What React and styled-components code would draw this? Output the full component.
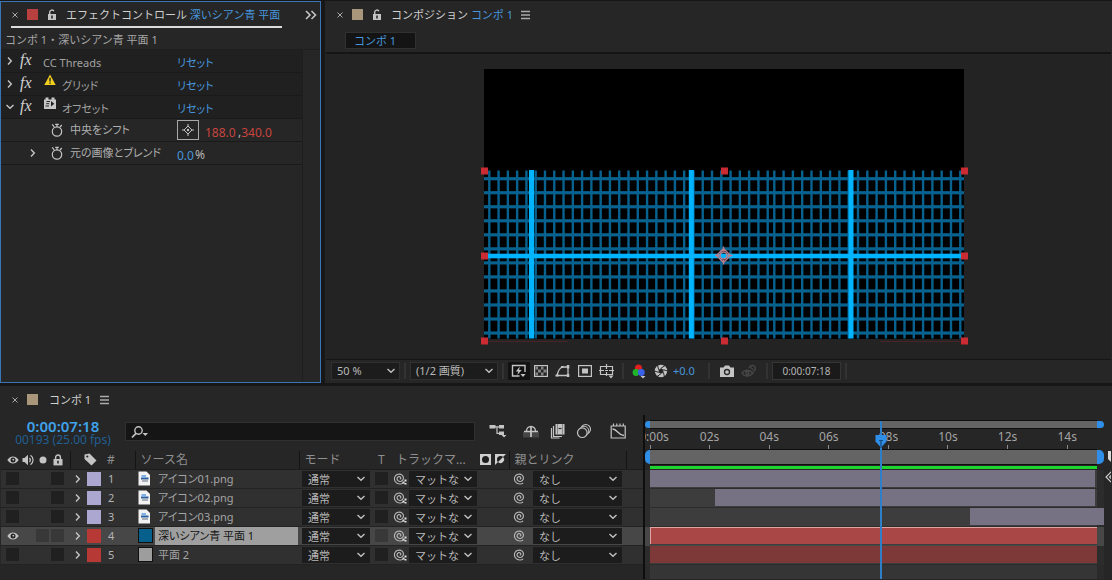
import React from "react";
import styled, { createGlobalStyle, css } from "styled-components";

const GlobalStyle = createGlobalStyle`
  *, *::before, *::after { box-sizing: border-box; }
  html, body { margin: 0; background: #171717; }
  body, button, input, select, table {
    font-family: "Noto Sans", "Noto Sans CJK JP", sans-serif;
    font-size: 11px;
    line-height: 16px;
    color: #b4b4b4;
  }
  h1, h2, p { margin: 0; font-size: 11px; font-weight: 400; }
  svg { display: block; flex: none; }
`;

/* ---------- shared parts ---------- */

const proportionalKana = css`
  font-feature-settings: "palt";
`;

const Page = styled.div`
  min-height: 100vh;
  display: grid;
  grid-template-rows: auto 1fr;
  gap: 3px;
  padding-top: 1px;
  overflow: hidden;
`;

const TopPanels = styled.div`
  display: grid;
  grid-template-columns: 321px minmax(0, 1fr);
  gap: 4px;
`;

const Panel = styled.section`
  background: #262626;
  border: 1px solid ${(p) => (p.$active ? "#3b74b5" : "#262626")};
  min-width: 0;
`;

const PlainButton = styled.button`
  display: flex;
  align-items: center;
  justify-content: center;
  padding: 0;
  border: 0;
  background: ${(p) => (p.$pressed ? "#121212" : "none")};
  width: ${(p) => p.$w || 16}px;
  height: ${(p) => p.$h || 16}px;
  color: #c4c4c4;
  flex: none;
`;

const TabBar = styled.header`
  display: flex;
  align-items: flex-start;
  height: ${(p) => p.$h || 26}px;
  padding: 0 1px 0 5px;
`;

const Tab = styled.div`
  display: flex;
  align-items: center;
  height: 26px;
  padding: 1px 2px 0 0;
  margin-left: 5px;
  border-bottom: 2px solid ${(p) => (p.$underlined ? "#dcdcdc" : "transparent")};
`;

const TabMore = styled(PlainButton)`
  align-self: center;
`;

const Swatch = styled.span`
  width: 11px;
  height: 11px;
  background: ${(p) => p.$color};
  margin-left: 8px;
  flex: none;
`;

const TabTitle = styled.h2`
  padding-top: 1px;
  margin-left: ${(p) => p.$gap || 0}px;
  line-height: 20px;
  white-space: nowrap;
  color: #d0d0d0;
`;

const Blue = styled.span`
  color: #4796dc;
`;

const Spacer = styled.span`
  flex: 1;
`;

/* ---------- icons ---------- */

const Svg = ({ w = 16, h = 16, vb, children }) => (
  <svg
    width={w}
    height={h}
    viewBox={vb || `0 0 ${w} ${h}`}
    fill="none"
    stroke="currentColor"
    strokeWidth="1.4"
    aria-hidden="true"
  >
    {children}
  </svg>
);
const CloseIcon = () => (
  <Svg w={8} h={8}><path d="M1.500 1.500l5 5M6.500 1.500l-5 5" strokeWidth="1" stroke="#a8a8a8" /></Svg>
);
const UnlockIcon = () => (
  <Svg w={10} h={12}>
    <rect x="1" y="5" width="8" height="6" fill="currentColor" stroke="none" />
    <path d="M2.700 5.500V3.200A2.200 2.200 0 0 1 6.900 2.300" />
    <path d="M5 6.500v3" stroke="#262626" strokeWidth="1.600" />
  </Svg>
);
const LockIcon = () => (
  <Svg w={10} h={12}>
    <rect x="0.500" y="5" width="9" height="6.400" fill="currentColor" stroke="none" />
    <path d="M2.600 5.500V3.400a2.400 2.400 0 0 1 4.800 0v2.100" />
    <path d="M5 6.800v2.600" stroke="#262626" strokeWidth="1.600" />
  </Svg>
);
const MenuIcon = () => (
  <Svg w={9} h={10}><path d="M0 1.500h9M0 5h9M0 8.500h9" strokeWidth="1.300" stroke="#aaa" /></Svg>
);
const MoreIcon = () => (
  <Svg w={12} h={10}><path d="M1 1l4 4-4 4M6.500 1l4 4-4 4" strokeWidth="1.600" /></Svg>
);
const RightIcon = () => (
  <Svg w={6} h={10}><path d="M1 1.500L4.300 5 1 8.500" /></Svg>
);
const DownIcon = () => (
  <Svg w={10} h={6}><path d="M1.500 1L5 4.300 8.500 1" /></Svg>
);
const StopwatchIcon = () => (
  <Svg w={14} h={16}>
    <circle cx="7" cy="9.500" r="4.700" strokeWidth="1.200" />
    <path d="M7 5V3M5.200 2.300h3.600M2.200 2.300l2 2.500M11.800 3L10 5M5.600 8" strokeWidth="1.200" />
  </Svg>
);
const WarningIcon = () => (
  <Svg w={12} h={12}>
    <path d="M6 0.500L11.700 11H0.300z" fill="#f3cf1d" stroke="none" />
    <path d="M6 3.800v3.600M6 8.400v1.400" stroke="#222" strokeWidth="1.400" />
  </Svg>
);
const GpuIcon = () => (
  <Svg w={12} h={12}>
    <path d="M0 2.500h1.500V0.500h3v2h3v-2h3v2H12V12H0z" fill="#c8c8c8" stroke="none" />
    <path d="M2.500 4.500h3.500M2.200 6.700h3M1.500 9h3.500" stroke="#2a2a2a" strokeWidth="1" />
    <path d="M7 4L10.300 6.800 7 9.600z" fill="#222" stroke="none" />
  </Svg>
);
const TargetIcon = () => (
  <Svg w={14} h={14}>
    <path d="M7 1v3M7 10v3M1 7h3M10 7h3M3 7l4-4 4 4-4 4z" strokeWidth="1" />
    <circle cx="7" cy="7" r="1.200" fill="currentColor" stroke="none" />
  </Svg>
);
const EyeIcon = () => (
  <Svg w={12} h={8}>
    <path d="M0.300 4C2 1.500 4 0.500 6 0.500S10 1.500 11.700 4C10 6.500 8 7.500 6 7.500S2 6.500 0.300 4z" fill="currentColor" stroke="none" />
    <circle cx="6" cy="4" r="2.500" fill="#222" stroke="none" />
    <circle cx="6.300" cy="3.700" r="0.900" fill="currentColor" stroke="none" />
  </Svg>
);
const SpeakerIcon = () => (
  <Svg w={12} h={12}>
    <path d="M0.500 4h2L6 0.800v10.400L2.500 8h-2z" fill="currentColor" stroke="none" />
    <path d="M7.500 4a3 3 0 0 1 0 4M8.500 1.300a5.600 5.600 0 0 1 0 9.400" strokeWidth="1.200" />
  </Svg>
);
const DotIcon = () => (
  <Svg w={8} h={8}><circle cx="4" cy="4" r="3.500" fill="currentColor" stroke="none" /></Svg>
);
const TagIcon = () => (
  <Svg w={13} h={13}>
    <path d="M0.500 1.500l5-1L12.500 7.500l-5 5L0.500 6z" fill="currentColor" stroke="none" />
    <circle cx="3.300" cy="3.500" r="1.100" fill="#262626" stroke="none" />
  </Svg>
);
const SearchIcon = () => (
  <Svg w={18} h={14}>
    <circle cx="7.500" cy="5.500" r="3.700" strokeWidth="1.400" />
    <path d="M5 8.300L1 12.500" strokeWidth="1.700" />
    <path d="M11.500 8h5.500l-2.700 3z" fill="currentColor" stroke="none" />
  </Svg>
);

const spiralPath = Array.from({ length: 49 }, (_, i) => {
  const t = i / 48;
  const angle = Math.PI * 0.4 - t * Math.PI * 4.1;
  const radius = 0.6 + t * 5.2;
  const x = 6.6 + Math.cos(angle) * radius * 1.05;
  const y = 6.4 - Math.sin(angle) * radius * -1;
  return `${i ? "L" : "M"}${x.toFixed(2)} ${y.toFixed(2)}`;
}).join("");

const PickwhipIcon = ({ matte }) => (
  <Svg w={14} h={13}>
    <path d={spiralPath} strokeWidth="1.100" stroke="#b8b8b8" />
    {matte && (
      <path d="M11.500 7.500h2v2h-2zM9.500 9.500h2v2h-2zM11.500 11h2v1.500h-2z" fill="#e0e0e0" stroke="none" />
    )}
  </Svg>
);
const FileIcon = () => (
  <Svg w={13} h={15}>
    <path d="M0.500 0.500h8L12 4v10.500H0.500z" fill="#f2f2f2" stroke="none" />
    <path d="M3 6.500h7.500v2H3z" fill="#2a5f9f" stroke="none" />
    <path d="M3.500 4h4.500v2.500H3.500z" fill="#7fb0e6" stroke="none" />
    <path d="M4 8.500h6v2.500H4z" fill="#a9b0ba" stroke="none" />
  </Svg>
);
const MaskIcon = () => (
  <Svg w={11} h={11}>
    <rect width="11" height="11" fill="#cfcfcf" stroke="none" />
    <circle cx="5.500" cy="5.500" r="3.500" fill="#1d1d1d" stroke="none" />
  </Svg>
);
const InvertIcon = () => (
  <Svg w={11} h={11}>
    <path d="M0 0h11L0 11z" fill="#cfcfcf" stroke="none" />
    <circle cx="5.500" cy="5.500" r="3.500" fill="#1d1d1d" stroke="none" />
    <path d="M8 3a3.500 3.500 0 0 1-5 5z" fill="#cfcfcf" stroke="none" />
  </Svg>
);
const FastPreviewIcon = () => (
  <Svg w={16} h={14}>
    <path d="M8.500 12H1.500V1.500H14V8" />
    <path d="M8.800 2.500L4.800 7.400h2.500L6.300 11l4.400-4.900H8.100z" fill="currentColor" stroke="none" />
    <path d="M9.500 10h5l-2.500 3z" fill="currentColor" stroke="none" />
  </Svg>
);
const TransparencyIcon = () => (
  <Svg w={14} h={12}>
    <rect x="0.600" y="0.600" width="12.800" height="10.800" strokeWidth="1.200" />
    <path d="M1.500 1.500H4V4.500H1.500zM7 1.500h2.500v3H7zM4 4.500h3v3H4zM9.500 4.500h3v3h-3zM1.500 7.500H4v3H1.500zM7 7.500h2.500v3H7z" fill="#858585" stroke="none" />
  </Svg>
);
const MaskPathIcon = () => (
  <Svg w={16} h={14}>
    <path d="M2 11.500C3 7 4.500 4 7.500 3H13v8.500z" strokeWidth="1.300" />
    <path d="M0.500 10.500h3v2h-3zM6 2h2.500v2H6zM11.800 1h2.500v3.500h-2.500zM11.800 10h2.500v3h-2.500z" fill="currentColor" stroke="none" />
  </Svg>
);
const RegionIcon = () => (
  <Svg w={14} h={12}>
    <rect x="0.600" y="0.600" width="12.800" height="10.800" strokeWidth="1.200" />
    <rect x="4" y="3.500" width="6" height="5" fill="currentColor" stroke="none" />
  </Svg>
);
const GuidesIcon = () => (
  <Svg w={16} h={15}>
    <path d="M1.500 2.500h12v8h-12zM7.500 0v5M7.500 8v4M0 6.500h5M10 6.500h5M6 6.500h3" strokeWidth="1.200" />
    <path d="M9.500 11.500h5l-2.500 3z" fill="currentColor" stroke="none" />
  </Svg>
);
const ChannelsIcon = () => (
  <Svg w={15} h={15}>
    <circle cx="6.500" cy="4" r="3.500" fill="#e02020" stroke="none" />
    <circle cx="4" cy="8.500" r="3.400" fill="#1fb528" stroke="none" />
    <circle cx="9.300" cy="8.500" r="3.400" fill="#3a62e8" stroke="none" />
    <path d="M8.500 12h5L11 14.500z" fill="currentColor" stroke="none" />
  </Svg>
);
const ApertureIcon = () => (
  <Svg w={14} h={14}>
    <circle cx="7" cy="7" r="6.200" fill="currentColor" stroke="none" />
    <path d="M7 4.300l2.400 1.400v2.700L7 9.700 4.600 8.400V5.700z" fill="#262626" stroke="none" />
    <path d="M7 4.300L11 1.500M9.400 5.700L13.500 7M9.400 8.400L10.500 13M7 9.700L3 12.500M4.600 8.400L0.500 7M4.600 5.700L3.500 1" stroke="#262626" strokeWidth="1" />
  </Svg>
);
const CameraIcon = () => (
  <Svg w={14} h={12}>
    <path d="M0 2.500h3.500L5 0.500h4l1.500 2H14V12H0z" fill="currentColor" stroke="none" />
    <circle cx="7" cy="7" r="2.500" stroke="#262626" strokeWidth="1.300" />
  </Svg>
);
const ShowSnapshotIcon = () => (
  <Svg w={16} h={14}>
    <g stroke="#484848" strokeWidth="1.400">
      <path d="M1 9c2-3 7-4.500 11 0-4 4.500-9 3.500-11 0z" />
      <circle cx="6.500" cy="9" r="1.500" />
      <path d="M8 4c1-3 5-3.500 6-1s0 4-2 4M10 3.500l2 2" />
    </g>
  </Svg>
);
const FlowchartIcon = () => (
  <Svg w={18} h={14}>
    <path d="M0.500 1h6v3.500h-6zM10 1h5v3.500h-5zM10 7.500h5V11h-5z" fill="currentColor" stroke="none" />
    <path d="M6 2.800h4M8 2.800v6.500h2" strokeWidth="1.200" />
    <path d="M12.500 11h5L15 13.500z" fill="currentColor" stroke="none" />
  </Svg>
);
const ShyIcon = () => (
  <Svg w={16} h={14}>
    <path d="M0 8h16v5.500H0z" fill="#454545" stroke="none" />
    <path d="M1 7.500h14M8 3v10" strokeWidth="1.700" />
    <path d="M3.500 7a4.500 4.500 0 0 1 9 0" strokeWidth="1.300" />
  </Svg>
);
const FrameBlendIcon = () => (
  <Svg w={16} h={16}>
    <path d="M5.500 1h9v10.500h-9z" fill="currentColor" stroke="none" />
    <path d="M3.500 3v10.500H12M1.500 5v10h8" strokeWidth="1.200" />
    <path d="M7.500 1v10.500M12.500 1v10.500" stroke="#777" strokeWidth="0.800" />
    <path d="M8.500 5.500h3" stroke="#333" strokeWidth="1.200" />
  </Svg>
);
const MotionBlurIcon = () => (
  <Svg w={16} h={16}>
    <circle cx="9.700" cy="6.300" r="4.800" strokeWidth="1.100" />
    <circle cx="8" cy="8" r="4.800" fill="#262626" strokeWidth="1" />
    <circle cx="6.300" cy="9.700" r="4.800" fill="#262626" strokeWidth="1.200" />
  </Svg>
);
const GraphIcon = () => (
  <Svg w={17} h={16}>
    <path d="M1.200 3h14v12h-14zM3.500 0.500V3M6.800 0.500V3M10 0.500V3M13.300 0.500V3" strokeWidth="1.200" />
    <path d="M2.500 6c5 0 5.500 6.500 11.500 6.500" strokeWidth="1.300" />
  </Svg>
);

/* ---------- effect controls ---------- */

const LayerPath = styled.p`
  height: 22px;
  padding: 4px 4px 0;
  color: #a6a6a6;
  border-bottom: 1px solid #1e1e1e;
`;

const EffectBody = styled.div`
  margin-right: 17px;
  border-right: 1px solid #1e1e1e;
  min-height: 331px;
  ${proportionalKana}
`;

const EffectRow = styled.div`
  display: grid;
  grid-template-columns: 172px 1fr;
  align-items: center;
  height: 23px;
  padding-left: 4px;
  background: ${(p) => (p.$sub ? "#262626" : "#202020")};
  border-bottom: 1px solid #1a1a1a;
`;

const EffectName = styled.div`
  display: flex;
  align-items: center;
  height: 22px;
  padding-left: ${(p) => p.$indent || 0}px;
  color: #a2a2a2;
`;

const Fx = styled.i`
  flex: none;
  width: 24px;
  padding: 0 0 2px 5px;
  font-family: "Liberation Serif", serif;
  font-size: 16px;
  line-height: 18px;
  color: #d0d0d0;
`;

const Badge = styled.span`
  flex: none;
  align-self: flex-start;
  padding: 1px 0 0 5px;
  width: 23px;
`;

const EffectLabel = styled.span`
  padding: 4px 0 0 ${(p) => (p.$plain ? 4 : 0)}px;
`;

const PropLabel = styled.label`
  padding-left: 6px;
  color: #b0b0b0;
`;

const ResetButton = styled.button`
  justify-self: start;
  padding: 4px 0 0;
  border: 0;
  background: none;
  color: #4796dc;
  ${proportionalKana}
`;

const Values = styled.div`
  display: flex;
  align-items: center;
  font-size: 12px;
`;

const Unit = styled.span`
  padding-top: 4px;
`;

const TargetButton = styled(PlainButton)`
  width: 22px;
  height: 20px;
  margin-right: 6px;
  border: 1px solid #a8a8a8;
`;

const Num = styled.input`
  width: ${(p) => p.$w}px;
  height: 20px;
  margin: 0;
  padding: 4px 0 0;
  border: 0;
  background: none;
  font-size: 12px;
  color: ${(p) => p.$color};
`;

function Effect({ name, icon, open }) {
  return (
    <EffectRow>
      <EffectName>
        <PlainButton $w={10} aria-label={`${name} ${open ? "折りたたむ" : "展開"}`}>
          {open ? <DownIcon /> : <RightIcon />}
        </PlainButton>
        <Fx>fx</Fx>
        {icon && <Badge>{icon}</Badge>}
        <EffectLabel $plain={!icon}>{name}</EffectLabel>
      </EffectName>
      <ResetButton>リセット</ResetButton>
    </EffectRow>
  );
}

function EffectControls() {
  return (
    <Panel $active>
      <TabBar>
        <Tab $underlined>
          <PlainButton $w={8} aria-label="閉じる"><CloseIcon /></PlainButton>
          <Swatch $color="#b8403e" />
          <PlainButton $w={28} aria-label="ロック"><UnlockIcon /></PlainButton>
          <TabTitle>エフェクトコントロール <Blue>深いシアン青 平面</Blue></TabTitle>
        </Tab>
        <Spacer />
        <TabMore aria-label="その他のパネル"><MoreIcon /></TabMore>
      </TabBar>
      <LayerPath>コンポ 1・深いシアン青 平面 1</LayerPath>
      <EffectBody>
        <Effect name="CC Threads" />
        <Effect name="グリッド" icon={<WarningIcon />} />
        <Effect name="オフセット" icon={<GpuIcon />} open />
        <EffectRow $sub>
          <EffectName $indent={45}>
            <PlainButton $w={14} aria-label="キーフレーム"><StopwatchIcon /></PlainButton>
            <PropLabel htmlFor="shift-x">中央をシフト</PropLabel>
          </EffectName>
          <Values>
            <TargetButton aria-label="位置を指定"><TargetIcon /></TargetButton>
            <Num id="shift-x" $w={33} $color="#c8453f" defaultValue="188.0" />
            <Unit>,</Unit>
            <Num aria-label="シフト Y" $w={40} $color="#c8453f" defaultValue="340.0" />
          </Values>
        </EffectRow>
        <EffectRow $sub>
          <EffectName $indent={11}>
            <PlainButton $w={34} aria-label="展開"><RightIcon /></PlainButton>
            <PlainButton $w={14} aria-label="キーフレーム"><StopwatchIcon /></PlainButton>
            <PropLabel htmlFor="blend">元の画像とブレンド</PropLabel>
          </EffectName>
          <Values>
            <Num id="blend" $w={18} $color="#4796dc" defaultValue="0.0" />
            <Unit>%</Unit>
          </Values>
        </EffectRow>
      </EffectBody>
    </Panel>
  );
}

/* ---------- composition viewer ---------- */

const CompNav = styled.nav`
  height: 26px;
  padding: 4px 19px;
  border-bottom: 2px solid #151515;
`;

const CompLink = styled.a`
  display: inline-block;
  width: 71px;
  height: 17px;
  padding-left: 8px;
  background: #141414;
  border: 1px solid #303030;
  line-height: 15px;
  color: #4796dc;
  text-decoration: none;
`;

const Stage = styled.div`
  display: flex;
  justify-content: center;
  padding: 12px 0 13px 11px;
  background: #232323;
`;

const ViewBar = styled.footer`
  display: flex;
  align-items: center;
  height: 23px;
  padding-left: 5px;
  border-top: 1px solid #151515;
  white-space: nowrap;
`;

const Divider = styled.span`
  width: 2px;
  height: 16px;
  margin: 0 ${(p) => p.$gap || 4}px;
  background: #333;
  flex: none;
`;

const SelectBox = styled.span`
  position: relative;
  display: block;
  width: ${(p) => p.$w}px;
  height: ${(p) => p.$h || 18}px;
  flex: none;
  color: #c0c0c0;
  svg {
    position: absolute;
    right: 4px;
    top: ${(p) => (p.$h ? 5 : 6)}px;
    pointer-events: none;
  }
`;

const SelectField = styled.select`
  appearance: none;
  display: block;
  width: 100%;
  height: 100%;
  margin: 0;
  padding: 0 14px 0 5px;
  border: 1px solid ${(p) => (p.$flat ? "#1c1c1c" : "#303030")};
  border-radius: 0;
  background: #1c1c1c;
  color: #b8b8b8;
`;

function Dropdown({ w, h, label, value, flat }) {
  return (
    <SelectBox $w={w} $h={h}>
      <SelectField $flat={flat} aria-label={label} defaultValue={value}>
        <option>{value}</option>
      </SelectField>
      <DownIcon />
    </SelectBox>
  );
}

const Exposure = styled.span`
  width: 28px;
  padding-left: 1px;
  color: #4796dc;
`;

const TimeBox = styled.button`
  width: 69px;
  height: 18px;
  padding: 0;
  border: 1px solid #353535;
  background: #1a1a1a;
  font-size: 10px;
  line-height: 14px;
`;

const fine = [
  ...Array.from({ length: 31 }, (_, i) => 489.3 + i * 9.28),
  ...Array.from({ length: 21 }, (_, i) => 774.3 + i * 9.3),
];
const rows = Array.from({ length: 12 }, (_, i) => 178.7 + i * 14.03);
const handles = [171, 256, 341]
  .flatMap((y) => [484.5, 724.5, 964.5].map((x) => [x, y]))
  .filter(([x, y]) => !(x === 724.5 && y === 256));

function CompView() {
  return (
    <svg width="490" height="280" viewBox="479 66 490 280" role="img" aria-label="コンポ 1">
      <rect x="484" y="69" width="480" height="270" fill="#000" />
      {rows.map((y) => (
        <rect key={y} x="484" y={y - 1.6} width="480" height="3.2" fill="#07628f" />
      ))}
      {fine.map((x) => (
        <rect key={x} x={x - 1.2} y="170.5" width="2.4" height="168" fill="#07628f" />
      ))}
      <rect x="484" y="253.7" width="480" height="4.6" fill="#00b4ff" />
      {[529, 688.8, 848.5].map((x) => (
        <rect key={x} x={x} y="170" width="5" height="168.5" fill="#00b4ff" />
      ))}
      <path d="M488 341.500h80M880 341.500h80" stroke="#4a2424" />
      {handles.map(([x, y]) => (
        <rect key={`${x}-${y}`} x={x - 3.5} y={y - 3.5} width="7" height="7" fill="#cb2c33" />
      ))}
      <g fill="none" stroke="#b97d8c" strokeWidth="1.400">
        <circle cx="723.500" cy="255.500" r="3.500" />
        <path d="M716.500 255.500l7-7 7 7-7 7zM723.500 246.500v4.500M723.500 260v4.500M715 255.500h4M728 255.500h4.500" />
      </g>
    </svg>
  );
}

function Composition() {
  return (
    <Panel>
      <TabBar>
        <Tab>
          <PlainButton $w={8} aria-label="閉じる"><CloseIcon /></PlainButton>
          <Swatch $color="#a8977a" />
          <PlainButton $w={28} aria-label="ロック"><UnlockIcon /></PlainButton>
          <TabTitle>コンポジション <Blue>コンポ 1</Blue></TabTitle>
          <PlainButton $w={24} aria-label="メニュー"><MenuIcon /></PlainButton>
        </Tab>
      </TabBar>
      <CompNav><CompLink href="#comp">コンポ 1</CompLink></CompNav>
      <Stage><CompView /></Stage>
      <ViewBar>
        <Dropdown w={69} label="拡大率" value="50 %" />
        <Divider />
        <Dropdown w={88} label="解像度" value="(1/2 画質)" />
        <Divider />
        <PlainButton $w={22} $h={18} $pressed aria-label="高速プレビュー"><FastPreviewIcon /></PlainButton>
        <PlainButton $w={22} aria-label="透明グリッド"><TransparencyIcon /></PlainButton>
        <PlainButton $w={22} aria-label="マスクパス"><MaskPathIcon /></PlainButton>
        <PlainButton $w={22} aria-label="目標範囲"><RegionIcon /></PlainButton>
        <PlainButton $w={22} aria-label="グリッドとガイド"><GuidesIcon /></PlainButton>
        <Divider />
        <PlainButton $w={22} aria-label="チャンネル"><ChannelsIcon /></PlainButton>
        <PlainButton $w={22} aria-label="露出をリセット"><ApertureIcon /></PlainButton>
        <Exposure>+0.0</Exposure>
        <Divider $gap={8} />
        <PlainButton $w={18} aria-label="スナップショット"><CameraIcon /></PlainButton>
        <PlainButton $w={26} aria-label="スナップショットを表示"><ShowSnapshotIcon /></PlainButton>
        <Divider />
        <TimeBox>0:00:07:18</TimeBox>
        <Divider />
      </ViewBar>
    </Panel>
  );
}

/* ---------- timeline ---------- */

const TimelinePanel = styled(Panel)`
  display: flex;
  flex-direction: column;
`;

const TimelineBody = styled.div`
  flex: 1;
  display: grid;
  grid-template-columns: 642px minmax(0, 1fr) 7px;
`;

const LayerTools = styled.div`
  display: flex;
  height: 36px;
`;

const Clock = styled.div`
  flex: none;
  width: 124px;
  padding-top: 4px;
  text-align: center;
  white-space: nowrap;
`;

const Timecode = styled.button`
  display: block;
  width: 100%;
  padding: 0;
  border: 0;
  background: none;
  font-size: 15px;
  font-weight: 600;
  line-height: 14px;
  color: #3fa2ea;
`;

const FrameInfo = styled.p`
  font-size: 12px;
  line-height: 14px;
  color: #1f5f92;
`;

const SearchBox = styled.label`
  display: flex;
  flex: none;
  align-items: center;
  width: 350px;
  height: 19px;
  margin-top: 7px;
  padding-left: 5px;
  background: #151515;
  border: 1px solid #303030;
  color: #c4c4c4;
`;

const SearchInput = styled.input`
  flex: 1;
  border: 0;
  padding: 0 6px;
  background: none;
  outline: 0;
`;

const ToolIcons = styled.div`
  display: flex;
  gap: 10px;
  height: 32px;
  align-items: center;
  padding-left: 10px;
`;

const LayerTable = styled.table`
  width: 642px;
  table-layout: fixed;
  border-collapse: collapse;
`;

const Th = styled.th`
  height: 18px;
  padding: 0 0 0 ${(p) => p.$pad || 0}px;
  border-bottom: 1px solid #1c1c1c;
  text-align: left;
  font-size: 12px;
  font-weight: 400;
  line-height: 16px;
  color: #8e8e8e;
  white-space: nowrap;
  ${(p) => p.$rule && css`border-right: 1px solid #141414;`}
`;

const Td = styled.td`
  height: 19px;
  padding: 0 0 0 ${(p) => p.$pad || 0}px;
`;

const Tr = styled.tr`
  background: ${(p) => (p.$selected ? "#474747" : "#303030")};
  border-bottom: 1px solid #232323;
`;

const Slots = styled.div`
  display: flex;
  align-items: center;
  gap: ${(p) => p.$gap || 2}px;
  color: #c4c4c4;
`;

const Slot = styled.span`
  display: flex;
  align-items: center;
  justify-content: center;
  width: 13px;
  height: 13px;
`;

const Check = styled.input`
  appearance: none;
  display: block;
  width: 13px;
  height: 13px;
  margin: 0;
  background: ${(p) => (p.$onRow ? "#383838" : "#202020")};
  border-radius: 0;
`;

const LabelColor = styled.span`
  display: block;
  flex: none;
  width: 14px;
  height: 14px;
  background: ${(p) => p.$color};
`;

const Source = styled.div`
  display: flex;
  align-items: center;
  height: 18px;
`;

const SolidChip = styled.span`
  display: block;
  width: 15px;
  height: 15px;
  background: ${(p) => p.$color};
  border: 1px solid #101010;
`;

const IconCell = styled.span`
  width: 18px;
  padding-left: 1px;
`;

const LayerName = styled.span`
  flex: 1;
  height: 18px;
  margin-right: 1px;
  padding-left: 3px;
  line-height: 18px;
  white-space: nowrap;
  color: ${(p) => (p.$selected ? "#151515" : "#a4a4a4")};
  background: ${(p) => (p.$selected ? "#9f9f9f" : "none")};
  ${proportionalKana}
`;

const HeadSplit = styled.div`
  display: flex;
  justify-content: space-between;
  align-items: center;
  padding-right: 3px;
`;

const layers = [
  { n: 1, name: "アイコン01.png", color: "#aca7d0", start: 0, length: 14.93, bar: "#767284" },
  { n: 2, name: "アイコン02.png", color: "#aca7d0", start: 2.17, length: 12.76, bar: "#767284" },
  { n: 3, name: "アイコン03.png", color: "#aca7d0", start: 10.74, length: 4.5, bar: "#767284" },
  { n: 4, name: "深いシアン青 平面 1", color: "#b73936", chip: "#075f8c", selected: true, start: 0, length: 15, bar: "#a84745" },
  { n: 5, name: "平面 2", color: "#b73936", chip: "#9d9d9d", start: 0, length: 15, bar: "#7c3938" },
];

function LayerRow({ n, name, color, chip, selected }) {
  return (
    <Tr $selected={selected}>
      <Td $pad={5}>
        <Slots>
          {selected ? (
            <PlainButton $w={13} $h={13} aria-label="表示" aria-pressed="true"><EyeIcon /></PlainButton>
          ) : (
            <Check type="checkbox" aria-label={`${name} 表示`} />
          )}
          <Slot />
          {selected ? <Check type="checkbox" $onRow aria-label={`${name} ソロ`} /> : <Slot />}
          <Check type="checkbox" $onRow={selected} aria-label={`${name} ロック`} />
        </Slots>
      </Td>
      <Td $pad={5}>
        <Slots $gap={6}>
          <PlainButton $w={6} aria-label={`${name} 展開`}><RightIcon /></PlainButton>
          <LabelColor $color={color} />
        </Slots>
      </Td>
      <Td $pad={4}>{n}</Td>
      <Td $pad={2}>
        <Source>
          <IconCell>{chip ? <SolidChip $color={chip} /> : <FileIcon />}</IconCell>
          <LayerName $selected={selected}>{name}</LayerName>
        </Source>
      </Td>
      <Td $pad={3}><Dropdown flat w={68} h={16} label={`${name} モード`} value="通常" /></Td>
      <Td $pad={3}><Check type="checkbox" $onRow={selected} aria-label={`${name} T`} /></Td>
      <Td $pad={2}>
        <Slots>
          <PlainButton $w={14} aria-label={`${name} マットピックウイップ`}><PickwhipIcon matte /></PlainButton>
          <Dropdown flat w={68} h={16} label={`${name} トラックマット`} value="マットな" />
        </Slots>
      </Td>
      <Td $pad={4}>
        <Slots $gap={6}>
          <PlainButton $w={14} aria-label={`${name} 親ピックウイップ`}><PickwhipIcon /></PlainButton>
          <Dropdown flat w={89} h={16} label={`${name} 親とリンク`} value="なし" />
        </Slots>
      </Td>
      <Td />
    </Tr>
  );
}

const Graph = styled.div`
  position: relative;
  display: flex;
  flex-direction: column;
  padding-top: 5px;
  border-left: 2px solid #0e0e0e;
  overflow: hidden;
`;

const Lane = styled.div`
  display: grid;
  grid-template-columns: 5px minmax(0, 1fr) 7px;
  height: ${(p) => p.$h}px;
  background: ${(p) => p.$bg || "transparent"};
`;

const RangeBar = styled.div`
  grid-column: 2;
  background: #646464;
  border: solid #0e0e0e;
  border-width: 1px 0;
`;

const RangeCap = styled.button`
  padding: 0;
  border: 0;
  background: #2f8fe8;
  margin: 1px 0;
  border-radius: ${(p) => (p.$end ? "0 5px 5px 0" : "5px 0 0 5px")};
`;

const RenderedBar = styled.div`
  grid-column: 2;
  margin: 1px 0;
  background: #1fd42f;
`;

const Ruler = styled.div`
  grid-column: 2;
  display: grid;
  grid-template-columns: repeat(7, 2fr) 1fr;
`;

const Mark = styled.div`
  display: flex;
  flex-direction: column;
  align-items: center;
  width: 0;
  font-size: 12px;
  line-height: 16px;
  white-space: nowrap;
  color: #a4a4a4;
  &:first-child span {
    padding-left: 8px;
  }
  &::after {
    content: "";
    width: 1px;
    height: 4px;
    flex: none;
    background: #8c8c8c;
  }
`;

const Track = styled.div`
  grid-column: 2;
  height: 18px;
  background: #3d3d3d;
`;

const Clip = styled.div`
  height: 17px;
  background: ${(p) => p.$color};
  border: solid ${(p) => (p.$selected ? "#e0a5a2" : "transparent")};
  border-width: 1px 0 0 1px;
`;

const EmptyLane = styled(Lane)`
  flex: 1;
  height: auto;
`;

const EmptyTrack = styled.div`
  grid-column: 2;
  background: #353535;
`;

const PlayheadLayer = styled.div`
  position: absolute;
  inset: 6px 7px 0 5px;
  pointer-events: none;
`;

const Playhead = styled.div`
  position: absolute;
  top: 0;
  bottom: 0;
  width: 14px;
  margin-left: -7px;
  color: #2f8fe8;
  background: linear-gradient(#2f7fc8, #2f7fc8) center / 2px 100% no-repeat;
  svg {
    margin-top: 13px;
  }
`;

const Gutter = styled.div`
  padding-top: 36px;
  overflow: hidden;
  color: #d8d8d8;
`;

const DURATION = 15;
const percent = (seconds) => `${(seconds / DURATION) * 100}%`;

function TimeGraph() {
  return (
    <Graph>
      <Lane $h={9}>
        <RangeCap aria-label="表示開始" />
        <RangeBar />
        <RangeCap $end aria-label="表示終了" />
      </Lane>
      <Lane $h={20}>
        <Ruler>
          {["0:00s", "02s", "04s", "06s", "08s", "10s", "12s", "14s"].map((t) => (
            <Mark key={t}><span>{t}</span></Mark>
          ))}
        </Ruler>
      </Lane>
      <Lane $h={16}>
        <RangeCap aria-label="ワークエリア開始" />
        <RangeBar />
        <RangeCap $end aria-label="ワークエリア終了" />
      </Lane>
      <Lane $h={5}><RenderedBar /></Lane>
      {layers.map((l) => (
        <Lane key={l.n} $h={19} $bg={l.selected ? "#474747" : "#2c2c2c"}>
          <Track>
            <Clip
              $color={l.bar}
              $selected={l.selected}
              style={{ marginLeft: percent(l.start), width: percent(l.length) }}
            />
          </Track>
        </Lane>
      ))}
      <EmptyLane $bg="#2a2a2a"><EmptyTrack /></EmptyLane>
      <PlayheadLayer>
        <Playhead style={{ left: percent(7.76) }}>
          <Svg w={14} h={14}>
            <path d="M1.500 1h11v6.500L7 13.500 1.500 7.500z" fill="currentColor" stroke="none" />
            <path d="M7 7v7M5 6.500h4" stroke="#174a80" strokeWidth="1.200" />
          </Svg>
        </Playhead>
      </PlayheadLayer>
    </Graph>
  );
}

function Timeline() {
  return (
    <TimelinePanel>
      <TabBar $h={28}>
        <Tab>
          <PlainButton $w={8} aria-label="閉じる"><CloseIcon /></PlainButton>
          <Swatch $color="#a8977a" />
          <TabTitle $gap={11}>コンポ 1</TabTitle>
          <PlainButton $w={26} aria-label="メニュー"><MenuIcon /></PlainButton>
        </Tab>
      </TabBar>
      <TimelineBody>
        <div>
          <LayerTools>
            <Clock>
              <Timecode>0:00:07:18</Timecode>
              <FrameInfo>00193 (25.00 fps)</FrameInfo>
            </Clock>
            <SearchBox>
              <SearchIcon />
              <SearchInput aria-label="検索" />
            </SearchBox>
            <ToolIcons>
              <PlainButton $w={26} aria-label="ミニフローチャート"><FlowchartIcon /></PlainButton>
              <PlainButton $w={20} aria-label="シャイ"><ShyIcon /></PlainButton>
              <PlainButton $w={14} aria-label="フレームブレンド"><FrameBlendIcon /></PlainButton>
              <PlainButton $w={18} aria-label="モーションブラー"><MotionBlurIcon /></PlainButton>
              <PlainButton $w={30} aria-label="グラフエディター"><GraphIcon /></PlainButton>
            </ToolIcons>
          </LayerTools>
          <LayerTable>
            <colgroup>
              {[69, 34, 31, 164, 73, 19, 118, 117, 17].map((w, i) => (
                <col key={i} width={w} />
              ))}
            </colgroup>
            <thead>
              <tr>
                <Th $pad={5} $rule>
                  <Slots>
                    <Slot><EyeIcon /></Slot>
                    <Slot><SpeakerIcon /></Slot>
                    <Slot><DotIcon /></Slot>
                    <Slot><LockIcon /></Slot>
                  </Slots>
                </Th>
                <Th $pad={13}><Slots><TagIcon /></Slots></Th>
                <Th $pad={3} $rule>#</Th>
                <Th $pad={5} $rule>ソース名</Th>
                <Th $pad={5}>モード</Th>
                <Th $pad={6}>T</Th>
                <Th $pad={5} $rule>
                  <HeadSplit>
                    <span>トラックマ...</span>
                    <Slots $gap={4}><MaskIcon /><InvertIcon /></Slots>
                  </HeadSplit>
                </Th>
                <Th $pad={5} $rule>親とリンク</Th>
                <Th />
              </tr>
            </thead>
            <tbody>
              {layers.map((l) => (
                <LayerRow key={l.n} {...l} />
              ))}
            </tbody>
          </LayerTable>
        </div>
        <TimeGraph />
        <Gutter>
          <Svg w={8} h={40}>
            <path d="M4 0h6v9l-2 3-4-4z" fill="currentColor" stroke="none" />
            <path d="M8 20l-6 6 6 6M8 23.500L5.500 26l2.500 2.500" strokeWidth="1.100" />
          </Svg>
        </Gutter>
      </TimelineBody>
    </TimelinePanel>
  );
}

export default function App() {
  return (
    <>
      <GlobalStyle />
      <Page>
        <TopPanels>
          <EffectControls />
          <Composition />
        </TopPanels>
        <Timeline />
      </Page>
    </>
  );
}
